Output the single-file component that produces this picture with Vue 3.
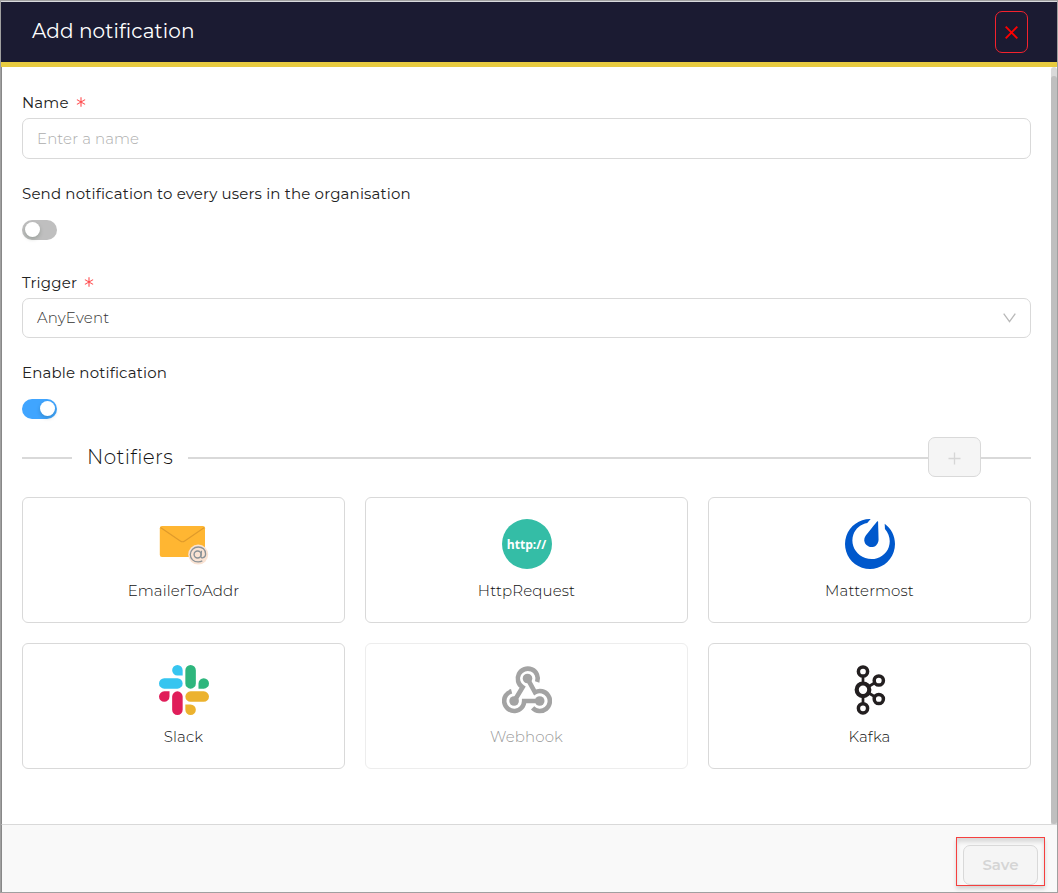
<script setup>
import { ref } from 'vue'

const name = ref('')
const notifiers = [
  { id: 'email', label: 'EmailerToAddr' },
  { id: 'http', label: 'HttpRequest' },
  { id: 'mattermost', label: 'Mattermost' },
  { id: 'slack', label: 'Slack' },
  { id: 'webhook', label: 'Webhook', disabled: true },
  { id: 'kafka', label: 'Kafka' },
]
</script>

<template>
  <div class="window">
    <header class="header">
      <h1 class="title">Add notification</h1>
      <button class="close" aria-label="Close">
        <svg width="13" height="13" viewBox="0 0 13 13"><path d="M.7.7l11.6 11.6M12.3.7L.7 12.3" stroke="#f00" stroke-width="1.9" /></svg>
      </button>
    </header>

    <main class="body">
      <div class="form">
        <div class="label"><span>Name</span><svg class="star" viewBox="0 0 10 10"><path d="M5 .3v9.4M.9 2.6l8.2 4.8M9.1 2.6L.9 7.4" /></svg></div>
        <input v-model="name" class="input" placeholder="Enter a name" />

        <div class="label second"><span>Send notification to every users in the organisation</span></div>
        <div class="switch"><i></i></div>

        <div class="label third"><span>Trigger</span><svg class="star" viewBox="0 0 10 10"><path d="M5 .3v9.4M.9 2.6l8.2 4.8M9.1 2.6L.9 7.4" /></svg></div>
        <div class="select">
          <span class="value">AnyEvent</span>
          <svg class="chevron" width="13" height="10" viewBox="0 0 13 10"><path d="M.7.6l5.8 8 5.8-8" fill="none" stroke="#b8b8b8" stroke-width="1.3" /></svg>
        </div>

        <div class="label fourth"><span>Enable notification</span></div>
        <div class="switch on"><i></i></div>

        <div class="divider">
          <span class="line short"></span>
          <h2>Notifiers</h2>
          <span class="line long"></span>
          <button class="add" aria-label="Add">
            <svg width="13" height="13" viewBox="0 0 13 13"><path d="M6.5 .5v12M.5 6.5h12" stroke="#d6d6d6" stroke-width="1.3" /></svg>
          </button>
          <span class="line short"></span>
        </div>

        <div class="grid">
          <div v-for="n in notifiers" :key="n.id" class="card" :class="{ disabled: n.disabled }">
            <svg v-if="n.id === 'email'" class="icon" viewBox="0 0 50 50">
              <rect x=".8" y="7" width="45.2" height="31" rx="2.2" fill="#ffb632" />
              <path d="M1.5 8.5L21.3 22q2.2 1.5 4.4 0L45.4 8.5" fill="none" stroke="#e09b2b" stroke-width="1.2" />
              <circle cx="39.2" cy="35.6" r="10" fill="#fae3d3" />
              <circle cx="38.6" cy="35.5" r="3.5" fill="none" stroke="#8a9297" stroke-width="1.4" />
              <path d="M42.5 31.8l-.6 5.2c-.3 3.3 4.7 2 4.7-2 0-4.4-3.2-7-7.3-7-4.6 0-8 3.3-8 7.6s3.4 7.3 7.8 7.3q2.4 0 4.2-1" fill="none" stroke="#8a9297" stroke-width="1.3" />
            </svg>
            <div v-else-if="n.id === 'http'" class="icon http"><span>http://</span></div>
            <svg v-else-if="n.id === 'mattermost'" class="icon" viewBox="0 0 24 24">
              <path fill="#0058cc" d="M12.081 0C7.048-.034 2.339 3.125.637 8.153c-2.125 6.276 1.24 13.086 7.516 15.21 6.276 2.125 13.086-1.24 15.21-7.516 1.727-5.1-.172-10.552-4.311-13.557l.126 2.547c2.065 2.282 2.88 5.512 1.852 8.549-1.534 4.532-6.594 6.915-11.3 5.321-4.708-1.593-7.28-6.559-5.745-11.092 1.031-3.046 3.655-5.121 6.694-5.67l1.642-1.94A4.87 4.87 0 0 0 12.08 0zm3.528 1.094a.284.284 0 0 0-.123.024l-.004.001a.33.33 0 0 0-.109.071c-.145.142-.657.828-.657.828L13.6 3.4l-1.3 1.585-2.232 2.776s-1.024 1.278-.798 2.851c.226 1.574 1.396 2.34 2.304 2.648.907.307 2.302.408 3.438-.704 1.135-1.112 1.098-2.75 1.098-2.75l-.087-3.56-.07-2.05-.047-1.775s.01-.856-.02-1.057a.33.33 0 0 0-.035-.107l-.013-.023a.277.277 0 0 0-.229-.14z" />
            </svg>
            <svg v-else-if="n.id === 'slack'" class="icon" viewBox="0 0 24 24">
              <path fill="#e01e5a" d="M5.042 15.165a2.528 2.528 0 0 1-2.52 2.523A2.528 2.528 0 0 1 0 15.165a2.527 2.527 0 0 1 2.522-2.52h2.52zM6.313 15.165a2.527 2.527 0 0 1 2.521-2.52 2.527 2.527 0 0 1 2.521 2.52v6.313A2.528 2.528 0 0 1 8.834 24a2.528 2.528 0 0 1-2.521-2.522z" />
              <path fill="#36c5f0" d="M8.834 5.042a2.528 2.528 0 0 1-2.521-2.52A2.528 2.528 0 0 1 8.834 0a2.528 2.528 0 0 1 2.521 2.522v2.52zM8.834 6.313a2.528 2.528 0 0 1 2.521 2.521 2.528 2.528 0 0 1-2.521 2.521H2.522A2.528 2.528 0 0 1 0 8.834a2.528 2.528 0 0 1 2.522-2.521z" />
              <path fill="#2eb67d" d="M18.956 8.834a2.528 2.528 0 0 1 2.522-2.521A2.528 2.528 0 0 1 24 8.834a2.528 2.528 0 0 1-2.522 2.521h-2.522zM17.688 8.834a2.528 2.528 0 0 1-2.523 2.521 2.527 2.527 0 0 1-2.52-2.521V2.522A2.527 2.527 0 0 1 15.165 0a2.528 2.528 0 0 1 2.523 2.522z" />
              <path fill="#ecb22e" d="M15.165 18.956a2.528 2.528 0 0 1 2.523 2.522A2.528 2.528 0 0 1 15.165 24a2.527 2.527 0 0 1-2.52-2.522v-2.522zM15.165 17.688a2.527 2.527 0 0 1-2.52-2.523 2.526 2.526 0 0 1 2.52-2.52h6.313A2.527 2.527 0 0 1 24 15.165a2.528 2.528 0 0 1-2.522 2.523z" />
            </svg>
            <svg v-else-if="n.id === 'webhook'" class="icon" viewBox="0 0 50 50">
              <g fill="none" stroke="#a3a3a3" stroke-width="4.6">
                <path d="M35.2 17A10 10 0 1 0 20.6 22.2L12.3 36" />
                <path d="M25.5 13.6L33 27.3A10 10 0 1 1 30.6 42.9" />
                <path d="M9.6 26.3A10 10 0 1 0 22.2 36H37.7" />
              </g>
              <g fill="#a3a3a3"><circle cx="25.5" cy="13.5" r="4.8" /><circle cx="12.1" cy="36" r="4.8" /><circle cx="37.7" cy="36" r="4.8" /></g>
            </svg>
            <svg v-else class="icon" viewBox="0 0 50 50">
              <g fill="none" stroke="#231f20">
                <path d="M18 11v7M18 32v6M24.5 21l5-3M24.5 28.5l5 3" stroke-width="2.7" />
                <circle cx="18" cy="24.8" r="6.3" stroke-width="4.2" />
                <g stroke-width="3.5"><circle cx="18" cy="6.5" r="4.6" /><circle cx="18" cy="43.3" r="4.6" /><circle cx="33.8" cy="15.5" r="4.6" /><circle cx="33.8" cy="34" r="4.6" /></g>
              </g>
            </svg>
            <span class="card-label">{{ n.label }}</span>
          </div>
        </div>
      </div>
      <div class="scrollbar"><div class="thumb"></div></div>
    </main>

    <footer class="footer">
      <div class="highlight"><button class="save">Save</button></div>
    </footer>
  </div>
</template>

<style>
html, body { margin: 0; overflow: hidden; }
</style>

<style scoped>
* { box-sizing: border-box; }
.window {
  width: 1058px; height: 893px; display: flex; flex-direction: column;
  background: #fff; border: 1px solid #a0a0a0; font-family: Montserrat, Inter, sans-serif; color: #222;
}
button { padding: 0; font: inherit; display: flex; align-items: center; justify-content: center; }
.header {
  height: 66px; flex: none; border-top: 1px solid #d9dadd; border-bottom: 5px solid #e8cb40; background: #1b1b32;
  display: flex; justify-content: space-between; padding: 9px 29px 0 31px;
}
.title { margin: 0; font-size: 20px; line-height: 40px; font-weight: 400; color: #fff; letter-spacing: .1px; }
.close { width: 33px; height: 42px; border: 1px solid #f5222d; border-radius: 7px; background: transparent; padding-top: 1px; }
.body { flex: 1; min-height: 0; display: flex; border-left: 1px solid #888; }
.form { flex: 1; padding: 25px 20px 0; }
.label { height: 22px; line-height: 22px; font-size: 15px; letter-spacing: .16px; display: flex; align-items: center; white-space: nowrap; color: #222; }
.star { width: 10px; height: 10px; margin: -2px 0 0 7px; fill: none; stroke: #ff4d4f; stroke-width: 1.1; }
.input {
  display: block; width: 1009px; height: 41px; margin-top: 4px; padding: 0 14px; border: 1px solid #d9d9d9; border-radius: 7px;
  font: 300 15px Montserrat, Inter, sans-serif; letter-spacing: .1px; background: #fff; outline: 0;
}
.input::placeholder { color: #adadad; opacity: 1; }
.second { margin-top: 24px; }
.switch { width: 35px; height: 20px; margin-top: 15px; padding: 2px 3px; border-radius: 10px; background: #bfbfbf; display: flex; }
.switch i { width: 15px; height: 15px; border-radius: 50%; background: #fff; box-shadow: 0 2px 4px rgba(0, 35, 11, .2); }
.on { background: #40a5ff; justify-content: flex-end; padding-right: 2px; }
.third { margin-top: 32px; }
.select {
  height: 40px; margin-top: 4px; padding: 0 14px; border: 1px solid #d9d9d9; border-radius: 7px; font-size: 15px; font-weight: 300;
  letter-spacing: .2px; color: #333; display: flex; align-items: center; justify-content: space-between;
}
.value { margin-top: -2px; }
.chevron { margin-top: -1px; }
.fourth { margin-top: 24px; }
.divider { height: 40px; margin-top: 18px; display: flex; align-items: center; }
.line { height: 2px; background: #d9d9d9; margin-top: 2px; }
.short { width: 50px; }
.long { flex: 1; }
.divider h2 { width: 116px; margin: 0; padding-left: 15px; font-size: 20px; line-height: 40px; font-weight: 300; letter-spacing: .35px; color: #111; }
.add { width: 53px; height: 40px; border: 1px solid #d9d9d9; border-radius: 7px; background: #f5f5f5; padding-top: 3px; }
.grid { margin-top: 20px; display: grid; grid-template-columns: repeat(3, 323px); gap: 20px; }
.card { height: 126px; border: 1px solid #d9d9d9; border-radius: 6px; display: flex; flex-direction: column; align-items: center; padding-top: 21px; }
.disabled { border-color: #ededed; }
.icon { width: 50px; height: 50px; flex: none; }
.http { border-radius: 50%; background: #34bda6; color: #fff; display: flex; align-items: center; justify-content: center; font: 700 12.1px/1 "Open Sans", sans-serif; padding-top: 2px; }
.card-label { margin-top: 11px; font-size: 15px; line-height: 22px; font-weight: 300; letter-spacing: .12px; color: #111; }
.disabled .card-label { color: #999; }
.scrollbar { width: 6px; background: #d9d9d9; padding-top: 9px; border-radius: 3px 3px 0 0; display: flex; }
.thumb { width: 6px; background: #bfbfbf; border-radius: 3px; }
.footer { height: 68px; flex: none; border-top: 1px solid #d9d9d9; border-left: 1px solid #888; background: #f9f9f9; display: flex; justify-content: flex-end; padding: 12px 12px 0 0; }
.highlight { width: 89px; height: 49px; border: 1px solid #f5403f; padding: 7px 6px 0; box-shadow: 0 3px 4px rgba(0, 0, 0, .15), inset 0 4px 4px rgba(0, 0, 0, .13); }
.save { width: 75px; height: 40px; border: 1px solid #d9d9d9; border-radius: 7px; background: #f5f5f5; color: #d5d5d5; font-size: 15px; font-weight: 600; padding-bottom: 2px; }
</style>
